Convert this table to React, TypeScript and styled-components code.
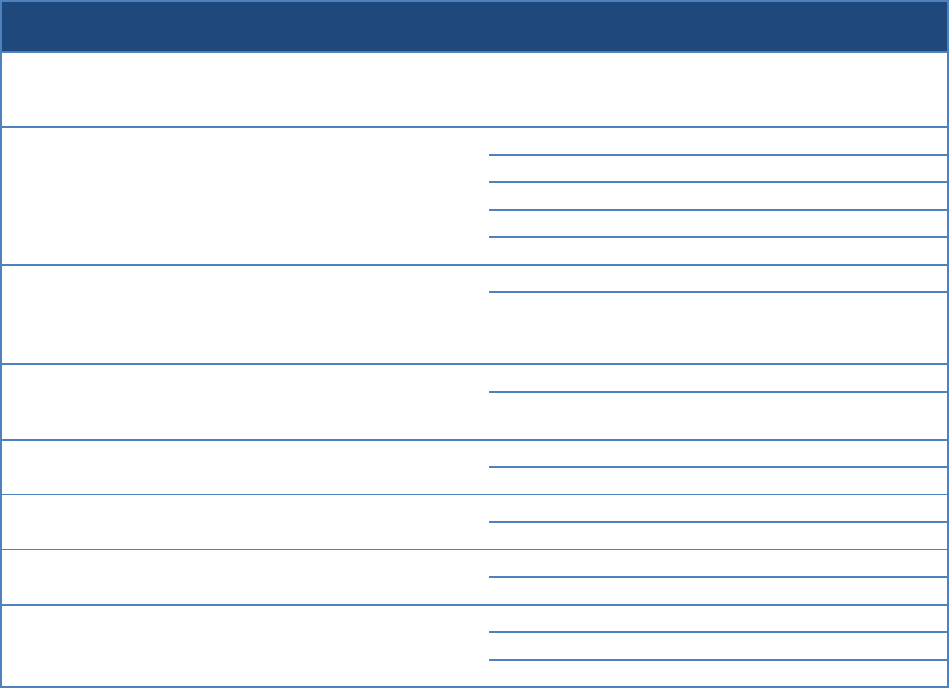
import styled, { createGlobalStyle } from "styled-components";

const GlobalStyle = createGlobalStyle`
  body {
    margin: 0;
    background: #ffffff;
    font-family: "Liberation Sans", Arial, sans-serif;
  }
`;

type RowType = {
  line: number;
  cells: number[];
};

const rows: RowType[] = [
  { line: 2, cells: [73] },
  { line: 2, cells: [26, 25, 26, 25, 26] },
  { line: 2, cells: [25, 70] },
  { line: 2, cells: [26, 46] },
  { line: 2, cells: [25, 26] },
  { line: 1, cells: [26, 26] },
  { line: 1, cells: [26, 26] },
  { line: 2, cells: [25, 26, 25] },
];

export default function App() {
  return (
    <>
      <GlobalStyle />
      <Table>
        <HeaderRow />
        {rows.map((row, i) => (
          <Row key={i} $line={row.line}>
            <LeftCell />
            <RightCell>
              {row.cells.map((h, j) => (
                <SubCell key={j} $height={h} $first={j === 0} />
              ))}
            </RightCell>
          </Row>
        ))}
      </Table>
    </>
  );
}

const Table = styled.div`
  width: 945px;
  border: 2px solid #4f81bd;
  display: flex;
  flex-direction: column;
`;

const HeaderRow = styled.div`
  height: 49px;
  background-color: #1f497d;
`;

const Row = styled.div<{ $line: number }>`
  display: flex;
  border-top: ${(p) => p.$line}px solid #4f81bd;
`;

const LeftCell = styled.div`
  width: 487px;
  flex-shrink: 0;
`;

const RightCell = styled.div`
  flex: 1;
  display: flex;
  flex-direction: column;
`;

const SubCell = styled.div<{ $height: number; $first: boolean }>`
  height: ${(p) => p.$height}px;
  border-top: ${(p) => (p.$first ? "none" : "2px solid #4f81bd")};
`;
